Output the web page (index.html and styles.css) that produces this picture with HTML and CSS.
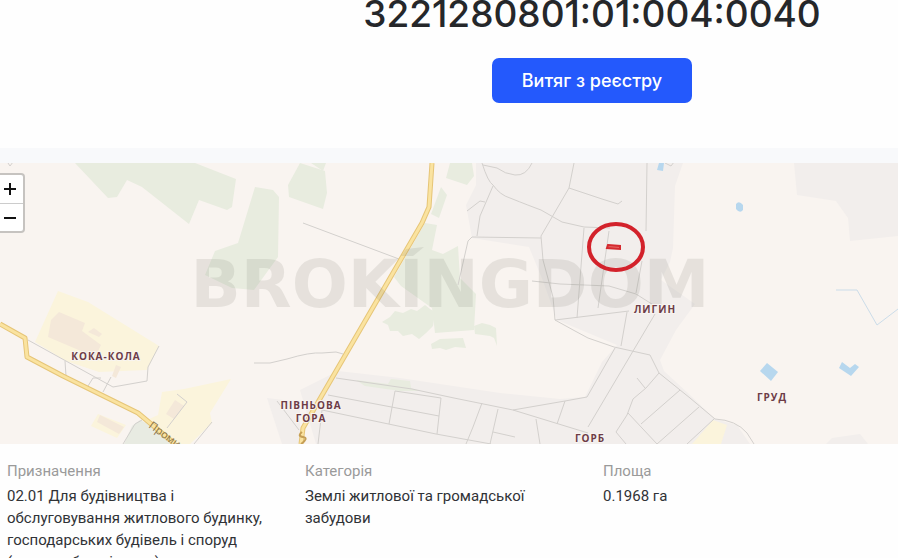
FILE: index.html
```html
<!DOCTYPE html>
<html lang="uk">
<head>
<meta charset="utf-8">
<meta name="viewport" content="width=device-width, initial-scale=1">
<title>3221280801:01:004:0040</title>
<link rel="stylesheet" href="styles.css">
</head>
<body>
<header class="plot-header">
  <h1 class="plot-number">3221280801:01:004:0040</h1>
  <button class="extract-button" type="button">Витяг з реєстру</button>
</header>
<main>
  <section class="map" aria-label="Карта">
    <svg class="map-canvas" viewBox="0 163 898 281" preserveAspectRatio="xMidYMid slice">
      <!-- built-up land -->
      <g fill="#f2eeec">
        <path d="M476 163H683L675 186 673 248 670 262 661 280 695 304 676 330 660 360 664 371 690 395 715 419 737 425 750 444H316L300 390 338 371 400 378 500 393 560 399 585 397 602 362 617 345 557 320 543 281 529 247 472 238 466 205 476 185Z"/>
        <path d="M794 163H898V236L850 241 848 218 836 201 797 195Z"/>
        <path d="M267 398 300 402 300 444H282Z"/>
        <path d="M826 444 832 438 860 434 868 444Z"/>
      </g>
      <!-- forest -->
      <g fill="#e8ecdf">
        <path d="M75 163H195L236 179 232 207 227 210 199 200 189 224 142 187 127 180 117 197 108 198Z"/>
        <path d="M255 187 273 190 279 197 278 257 254 290 232 288 205 275 215 251 238 243Z"/>
        <path d="M300 163 325 171 327 193 323 209 289 197 288 185Z"/>
        <path d="M311 163H326L323 171Z"/>
        <path d="M450 163H472L474 176 467 185 446 178Z"/>
        <path d="M441 187 447 195 439 218 431 214Z"/>
        <path d="M425 223 437 225 432 250 443 254 458 246 460 278 476 294 474 330 435 333 432 308 401 286 394 277Z"/>
        <path d="M382 322 390 317 395 311 403 313 411 309 417 311 425 305 430 309 435 312 433 326 426 333 419 339 412 334 403 336 398 331 390 331 388 325Z"/>
        <path d="M431 344 440 339 463 338 466 348 455 347 446 350 440 348 432 349Z"/>
        <path d="M474 326 482 323 490 325 496 328 497 346 494 338 490 336 475 334Z"/>
        <path d="M356 380 388 384 391 379 410 381 411 388 420 391 400 391 365 386Z"/>
      </g>
      <path fill="#e8ebe2" d="M140 420 148 424 172 444H124L132 426Z"/>
      <!-- industrial land -->
      <g fill="#fbf4dc">
        <path d="M58 291 88 302 159 346 147 370 99 372 66 361 35 342Z"/>
        <path d="M162 392 184 389 231 379 210 413 212 423 190 444H178L147 420 158 415Z"/>
        <path d="M98 414 126 425 117 438 91 426Z"/>
        <path d="M713 420 727 425 721 444H692Z"/>
      </g>
      <g fill="#f4e8d9">
        <path d="M59 312 85 323 82 331 101 345 95 357 48 337 51 320Z"/>
        <path d="M88 332 94 328 102 334 99 337Z"/>
        <path d="M100 415 124 427 119 434 97 422Z"/>
        <path d="M175 400 184 406 174 419 166 414Z"/>
        <path d="M116 365 121 367 116 378 112 376Z"/>
      </g>
      <!-- water -->
      <g fill="#b7d7ee">
        <path d="M659 163H664L663 171 657 170Z"/>
        <path d="M736 204Q739 200 743 205V210Q740 214 736 209Z"/>
        <path d="M767 363 778 372 771 381 760 371Z"/>
        <path d="M842 362 850 368 855 364 859 367 851 376 839 368Z"/>
      </g>
      <path class="stream" d="M836 290H857L877 325 898 309"/>
      <!-- minor roads -->
      <g class="lanes">
        <path d="M303 223 399 259M254 363H270L287 359Q310 352 322 353L336 352 343 354"/>
        <path d="M482 163Q488 182 493 185Q500 195 510 198Q530 206 541 210L562 222 584 227 610 228"/>
        <path d="M483 165 497 168Q505 174 515 175 526 176 532 163M493 186 480 216 477 236M467 211 480 201 485 202"/>
        <path d="M574 163 569 188 541 236 543 260 553 297 555 320 629 311M569 188 602 199 618 204 622 201"/>
        <path d="M458 285 468 241 472 237 541 238M532 281 560 284 609 286 636 294 655 306"/>
        <path d="M584 228 577 318M609 231 598 308M647 163 646 231M642 261 636 293"/>
        <path d="M555 320 575 331 588 338 614 347 650 355 659 373 690 398 715 419Q736 420 747 433L754 444"/>
        <path d="M627 312 621 346M655 314 588 427M615 348 587 397 565 401 513 410M565 401 557 424"/>
        <path d="M336 378 412 389 454 398 513 410 588 433M328 395 439 416M322 410 436 434 491 444"/>
        <path d="M395 391 389 424M395 391 441 398 437 434M482 403 473 427 466 444M498 409 490 444M493 432 515 437M536 419 540 444"/>
        <path d="M659 373 646 388 633 399 627 415 616 432 626 444M637 378 645 388M628 413 657 444M680 390 641 424M699 407 657 444M714 419 687 444"/>
        <path d="M277 401 299 430M322 410 318 444"/>
        <path d="M28 340 113 387 147 381 148 367 159 346M65 361 66 376M88 386 93 378 101 378M103 392 111 377"/>
        <path d="M177 394 187 402 167 428M212 422 194 444M123 444 135 424 142 420"/>
        <path d="M8 163 10 166 13 162M665 163 671 166 674 162"/>
      </g>
      <!-- main roads -->
      <path class="road-edge" d="M432 163 429 207 422 223 303 428 301 444M0 324 25 338 27 357 63 376 138 413 175 444"/>
      <path class="road" d="M432 163 429 207 422 223 303 428 301 444M0 324 25 338 27 357 63 376 138 413 175 444"/>
      <path class="road-tail" d="M302 432Q297 436 303 437T301 444"/>
      <text class="street" transform="translate(148 427) rotate(36)">Промислова</text>
      <g class="watermark">
        <path d="M401 256 406 249 424 247 413 256Z"/>
        <text x="450" y="307">BROKINGDOM</text>
      </g>
      <!-- place names -->
      <g class="places">
        <text x="106" y="360">КОКА-КОЛА</text>
        <text x="311" y="409">ПІВНЬОВА</text>
        <text x="311" y="422">ГОРА</text>
        <text x="590" y="442">ГОРБ</text>
        <text x="655" y="313">ЛИГИН</text>
        <text x="772" y="401">ГРУД</text>
      </g>
      <!-- plot and its marker -->
      <path class="plot" d="M608 245 620 246V249L607 248Z"/>
      <ellipse class="marker" cx="616" cy="247" rx="27" ry="23"/>
    </svg>
    <div class="zoom">
      <button type="button" aria-label="Наблизити"><svg viewBox="0 0 12 12"><path d="M0 6H12M6 0V12"/></svg></button>
      <button type="button" aria-label="Віддалити"><svg viewBox="0 0 12 12"><path d="M0 6H12"/></svg></button>
    </div>
  </section>
  <dl class="details">
    <div>
      <dt>Призначення</dt>
      <dd>02.01 Для будівництва і обслуговування житлового будинку, господарських будівель і споруд (присадибна ділянка)</dd>
    </div>
    <div>
      <dt>Категорія</dt>
      <dd>Землі житлової та громадської забудови</dd>
    </div>
    <div>
      <dt>Площа</dt>
      <dd>0.1968 га</dd>
    </div>
  </dl>
</main>
</body>
</html>
```
FILE: styles.css
```css
* {
  box-sizing: border-box;
}

body {
  margin: 0;
  background: #fefefe;
  color: #303236;
  font-family: Inter, "Liberation Sans", sans-serif;
  overflow-x: hidden;
}

.plot-header {
  display: flex;
  flex-direction: column;
  align-items: center;
  gap: 30px;
  padding: 0 0 45px 286px;
}

.plot-number {
  margin: 0;
  color: #25272a;
  font-size: 37px;
  font-weight: 500;
  line-height: 28px;
}

.extract-button {
  padding: 11px 30px;
  border: 0;
  border-radius: 7px;
  background: #2459fc;
  color: #fff;
  font: 500 18px/23px Inter, "Liberation Sans", sans-serif;
}

.map {
  position: relative;
  border-top: 15px solid #f8f9fb;
}

.map-canvas {
  display: block;
  width: 100%;
  background: #f9f4f0;
}

.lanes,
.stream,
.road,
.road-edge,
.road-tail,
.marker {
  fill: none;
  stroke-linejoin: round;
}

.lanes {
  stroke: #d3d0cd;
}

.stream {
  stroke: #cbdce9;
}

.road-edge {
  stroke: #e6c577;
  stroke-width: 5;
}

.road {
  stroke: #fae3a0;
  stroke-width: 3;
}

.road-tail {
  stroke: #c59e55;
  stroke-width: 2;
}

.street {
  fill: #8b7444;
  font: 11px "Open Sans", sans-serif;
}

.places {
  fill: #6d3c47;
  stroke: #f8f4f0;
  stroke-width: 2;
  paint-order: stroke;
  font: 700 10px "Open Sans", sans-serif;
  letter-spacing: 1px;
  text-anchor: middle;
}

.plot {
  fill: #e36b67;
  stroke: #d52a2f;
  stroke-width: 2;
}

.marker {
  stroke: #d3222b;
  stroke-width: 4;
}

.watermark {
  fill: #77776b;
  opacity: 0.14;
  font: 700 66px "DejaVu Sans", sans-serif;
  text-anchor: middle;
}

.zoom {
  position: absolute;
  top: 10px;
  left: 0;
  display: grid;
  width: 25px;
  border: 2px solid #c6c3c0;
  border-left: 0;
  border-radius: 0 4px 4px 0;
  background: #fff;
}

.zoom button {
  display: flex;
  align-items: center;
  height: 28px;
  padding: 0 4px;
  border: 0;
  background: none;
}

.zoom button + button {
  border-top: 1px solid #ccc;
}

.zoom svg {
  width: 12px;
  height: 12px;
  stroke: #111;
  stroke-width: 2;
}

.details {
  display: grid;
  grid-template-columns: repeat(3, 1fr);
  column-gap: 3px;
  margin: 0;
  padding: 16px 0 0 7px;
  font-family: Roboto, "Liberation Sans", sans-serif;
  font-size: 15px;
  line-height: 22px;
}

.details dt {
  margin-bottom: 3px;
  color: #9a9a9a;
}

.details dd {
  max-width: 270px;
  margin: 0;
}
```
